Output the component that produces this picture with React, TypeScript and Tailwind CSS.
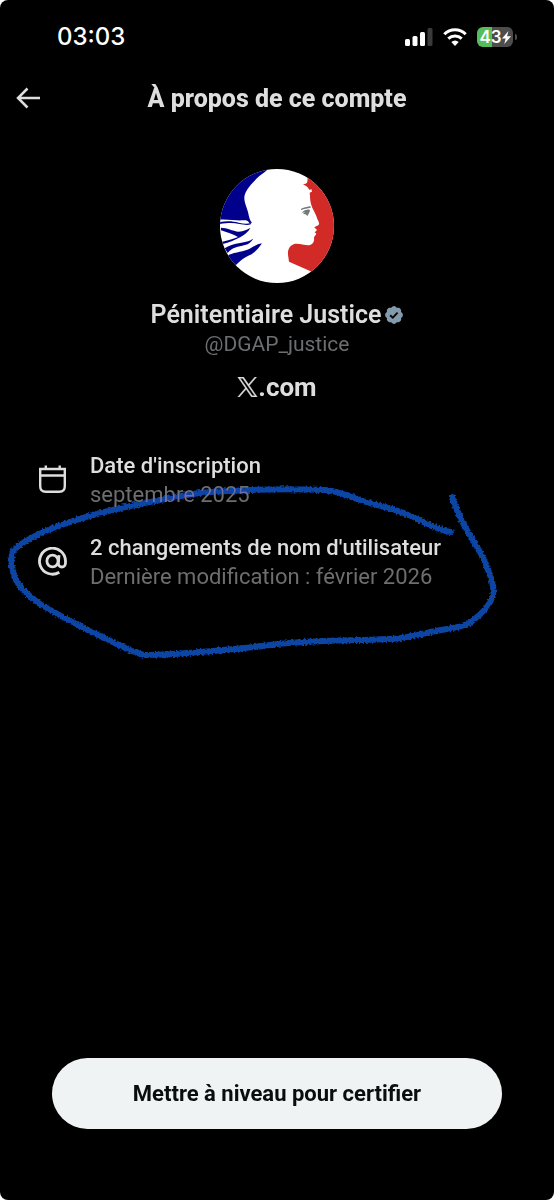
import React from 'react';

function StatusBar() {
  return (
    <div className="flex h-[74px] items-center justify-between pr-[37px] pl-[57px]">
      <time className="font-['Inter',sans-serif] text-[24px] leading-8 font-medium text-white">03:03</time>
      <div className="flex items-center gap-[10px]">
        <svg className="h-[18px] w-7" viewBox="0 0 28 18" aria-hidden="true">
          <rect x="0" y="11" width="5" height="7" rx="1.5" fill="#fff" />
          <rect x="7.5" y="8" width="5" height="10" rx="1.5" fill="#fff" />
          <rect x="15" y="4" width="5" height="14" rx="1.5" fill="#fff" />
          <rect x="22.5" y="0" width="5" height="18" rx="1.5" fill="#3a3a3a" />
        </svg>
        <svg className="h-[18px] w-6" viewBox="0 0 24 18" aria-hidden="true">
          <path d="M1.300 6.300C7.200 .3 16.800 .3 22.700 6.300M5.300 10.700C9.200 7 14.800 7 18.700 10.700" fill="none" stroke="#fff" strokeWidth="3" />
          <path d="M8.300 14Q12 10.900 15.700 14L12 18Z" fill="#fff" />
        </svg>
        <div className="flex items-center gap-[2px]">
          <div className="flex h-5 w-9 items-center justify-center rounded-[6px] bg-[linear-gradient(90deg,#56bd5b_43%,#4d4d4d_43%)]">
            <span className="font-['Inter',sans-serif] text-[17px] leading-5 font-semibold text-white">43</span>
            <svg className="h-[13px] w-[9px]" viewBox="0 0 9 13" aria-hidden="true">
              <path d="M6.500 0L0 7.500H3.600L2.300 13L9 5.300H5Z" fill="#fff" />
            </svg>
          </div>
          <span className="h-[6px] w-[2px] rounded-r-full bg-[#4d4d4d]" />
        </div>
      </div>
    </div>
  );
}

function Marianne() {
  return (
    <svg className="size-[114px] rounded-full" viewBox="30 27 342 342" role="img" aria-label="Marianne">
      <rect x="30" y="27" width="342" height="342" fill="#fff" />
      <path d="M30 27H174C160 42 146 47 134 62C118 78 104 96 103 112C102 126 110 140 114 156C117 170 119 181 126 188L118 189C113 180 108 181 98 181C84 183 60 178 30 179Z" fill="#00008c" />
      <path d="M30 186C54 182 72 185 86 188C99 191 111 193 122 189L124 192C113 197 101 194 88 192C72 188 54 188 30 192Z" fill="#00008c" />
      <path d="M33 203C50 203 68 213 86 215C102 215 111 208 121 204C116 215 102 226 84 235C68 244 48 251 36 252L34 246C55 241 72 236 84 231C70 222 50 218 33 211Z" fill="#00008c" />
      <path d="M44 265C66 250 91 250 108 245C118 243 124 239 130 236C122 248 114 253 104 255C85 261 67 261 53 279Z" fill="#00008c" />
      <path d="M55 285C79 275 101 275 119 266C133 258 143 252 156 250C144 267 134 279 118 286C102 293 89 304 78 315L50 310Z" fill="#00008c" />
      <path d="M293 52C292 62 294 68 287 71L279 73C289 77 295 84 299 90L304 87L306 95L299 98C301 109 299 118 303 132C308 150 316 158 320 171C322 180 329 187 327 193C324 199 315 198 313 203L320 208C321 212 316 214 314 217L319 221C318 226 311 228 312 235C314 245 307 254 298 256C282 257 264 248 251 253C237 258 233 272 234 284L237 305L302 334L375 369V27Z" fill="#d22b27" />
      <path d="M272 147C280 142 290 141 301 138L302 143C292 146 282 145 274 150ZM275 158C282 151 290 148 299 149L300 153C297 158 296 163 292 168L287 163L279 162L285 157Z" fill="#727b7b" />
    </svg>
  );
}

function VerifiedBadge() {
  return (
    <svg className="size-[18px]" viewBox="1.500 1.500 19 19" role="img" aria-label="Compte certifié">
      <path fill="#829aab" d="M20.396 11c-.018-.646-.215-1.275-.57-1.816-.354-.54-.852-.972-1.438-1.246.223-.607.270-1.264.140-1.897-.131-.634-.437-1.218-.882-1.687-.470-.445-1.053-.750-1.687-.882-.633-.130-1.290-.083-1.897.140-.273-.587-.704-1.086-1.245-1.440S11.647 1.620 11 1.604c-.646.017-1.273.213-1.813.568s-.969.854-1.240 1.440c-.608-.223-1.267-.272-1.902-.140-.635.130-1.220.436-1.690.882-.445.470-.749 1.055-.878 1.688-.130.633-.080 1.290.144 1.896-.587.274-1.087.705-1.443 1.245-.356.540-.555 1.170-.574 1.817.020.647.218 1.276.574 1.817.356.540.856.972 1.443 1.245-.224.606-.274 1.263-.144 1.896.130.634.433 1.218.877 1.688.470.443 1.054.747 1.687.878.633.132 1.290.084 1.897-.136.274.586.705 1.084 1.246 1.439.540.354 1.170.551 1.816.569.647-.016 1.276-.213 1.817-.567s.972-.854 1.245-1.440c.604.239 1.266.296 1.903.164.636-.132 1.220-.447 1.680-.907.460-.460.776-1.044.908-1.681s.075-1.299-.165-1.903c.586-.274 1.084-.705 1.439-1.246.354-.540.551-1.170.569-1.816z" />
      <path d="M6.900 11.300L9.700 13.900L14.800 8.400" fill="none" stroke="#050608" strokeWidth="2" />
    </svg>
  );
}

function XLogo() {
  return (
    <svg className="h-5 w-[21px]" viewBox="0 0 1200 1227" role="img" aria-label="X">
      <path fill="#dedede" stroke="#dedede" strokeWidth="24" d="M714.163 519.284L1160.890 0H1055.030L667.137 450.887L357.328 0H0L468.492 681.821L0 1226.370H105.866L515.491 750.218L842.672 1226.370H1200L714.137 519.284H714.163ZM569.165 687.828L521.697 619.934L144.011 79.694H306.615L611.412 515.685L658.880 583.579L1055.080 1150.300H892.476L569.165 687.854V687.828Z" />
    </svg>
  );
}

function CalendarIcon() {
  return (
    <svg className="size-[30px]" viewBox="0 0 30 30" fill="none" stroke="#dedede" strokeWidth="2.400" aria-hidden="true">
      <path d="M2.200 4H26.800V21.300Q26.800 26.800 21.300 26.800H7.700Q2.200 26.800 2.200 21.300ZM2.200 10.500H26.800M7.800 .5V4M21.700 .5V4" />
    </svg>
  );
}

function AtIcon() {
  return (
    <svg className="size-[30px]" viewBox="0 0 30 30" fill="none" stroke="#dedede" strokeWidth="2.800" aria-hidden="true">
      <path d="M21.300 25.300A13 13 0 1 1 27.500 14V15.700C27.500 18.200 26 20 23.900 20C21.700 20 20.200 18.400 20.400 16L21 8.200" />
      <ellipse cx="14.500" cy="14" rx="5.600" ry="5.900" />
    </svg>
  );
}

function InfoRow({ icon, title, detail }: { icon: React.ReactNode; title: string; detail: string }) {
  return (
    <li className="flex items-center gap-[22px]">
      {icon}
      <div>
        <p className="text-[22px] leading-[29px] font-medium text-[#dedede]">{title}</p>
        <p className="text-[22px] leading-[29px] text-[#6c6e70]">{detail}</p>
      </div>
    </li>
  );
}

function PenCircle() {
  return (
    <svg className="pointer-events-none absolute top-[77px] left-0 h-[190px] w-[554px] mix-blend-lighten" viewBox="0 481 554 190" aria-hidden="true">
      <filter id="crayon" x="-5%" y="-5%" width="110%" height="110%">
        <feTurbulence type="fractalNoise" baseFrequency="0.5" numOctaves="2" seed="4" />
        <feDisplacementMap in="SourceGraphic" scale="4" xChannelSelector="R" yChannelSelector="G" />
      </filter>
      <path
        filter="url(#crayon)"
        d="M452 498C456 508 460 519 465 528C472 540 480 551 486 566C490 576 495 587 493 596C490 607 482 615 471 623C462 629 448 629 436 632C416 636 404 640 388 640C350 642 310 641 270 646C235 650 195 655 145 656C132 654 112 642 98 636C78 626 55 614 40 605C28 596 16 586 14 576C11 566 10 557 14 551C23 542 40 534 56 528C77 520 110 511 140 505C165 500 200 492 230 492C260 490 300 490 326 491C342 493 353 499 366 503C380 507 396 510 408 516C422 521 435 531 451 533"
        fill="none"
        stroke="#0a45a5"
        strokeWidth="6"
        strokeLinecap="round"
        strokeLinejoin="round"
      />
    </svg>
  );
}

export default function App() {
  return (
    <main className="flex min-h-screen flex-col rounded-[8px] bg-black font-['Roboto',sans-serif]">
      <StatusBar />
      <header className="grid h-[50px] grid-cols-[40px_1fr_40px] items-center px-[14px]">
        <button type="button" aria-label="Retour">
          <svg className="size-7" viewBox="0 0 28 28" fill="none" stroke="#dedede" strokeWidth="2.500" aria-hidden="true">
            <path d="M26 13H4M13.500 3.500L4 13L13.500 22.500" />
          </svg>
        </button>
        <h1 className="text-center text-[25px] leading-8 font-extrabold text-[#dedede]">À propos de ce compte</h1>
      </header>

      <section className="flex flex-col items-center pt-[45px]">
        <Marianne />
        <h2 className="mt-4 flex items-center gap-1 text-[25px] leading-8 font-semibold text-[#dedede]">
          Pénitentiaire Justice
          <VerifiedBadge />
        </h2>
        <p className="text-[21px] leading-[26px] text-[#6c6e70]">@DGAP_justice</p>
        <p className="mt-[14px] flex items-center text-[26px] leading-8 font-bold text-[#dedede]">
          <XLogo />
          .com
        </p>
      </section>

      <section className="relative pt-12">
        <ul className="flex flex-col gap-6 px-[38px]">
          <InfoRow icon={<CalendarIcon />} title="Date d'inscription" detail="septembre 2025" />
          <InfoRow icon={<AtIcon />} title="2 changements de nom d'utilisateur" detail="Dernière modification : février 2026" />
        </ul>
        <PenCircle />
      </section>

      <footer className="mt-auto px-[52px] pb-[71px]">
        <button type="button" className="h-[71px] w-full rounded-full bg-[#eff3f4] text-[22px] font-bold text-[#0a0d10]">
          Mettre à niveau pour certifier
        </button>
      </footer>
    </main>
  );
}
